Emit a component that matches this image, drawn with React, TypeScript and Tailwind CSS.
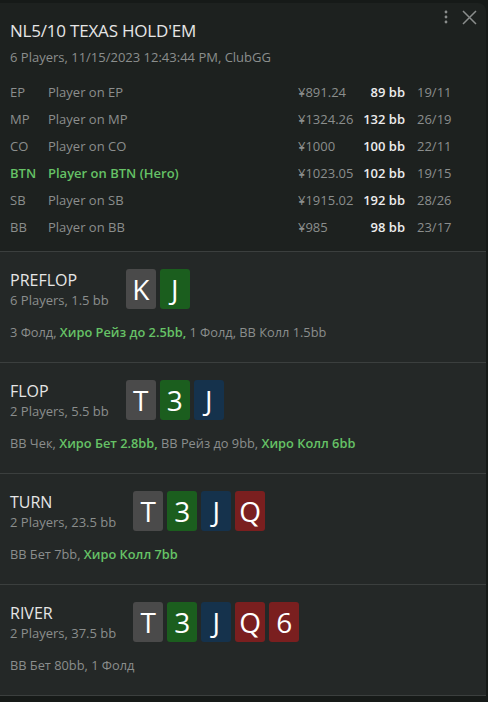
import React from 'react';

type Card = { r: string; c: 'gray' | 'green' | 'blue' | 'red' };

const cardColors: Record<Card['c'], string> = {
  gray: 'bg-[#4a4a4a]',
  green: 'bg-[#1b5e1e]',
  blue: 'bg-[#15324c]',
  red: 'bg-[#7a1f1f]',
};

const players = [
  { pos: 'EP', name: 'Player on EP', stack: '¥891.24', bb: '89 bb', stat: '19/11' },
  { pos: 'MP', name: 'Player on MP', stack: '¥1324.26', bb: '132 bb', stat: '26/19' },
  { pos: 'CO', name: 'Player on CO', stack: '¥1000', bb: '100 bb', stat: '22/11' },
  { pos: 'BTN', name: 'Player on BTN (Hero)', stack: '¥1023.05', bb: '102 bb', stat: '19/15', hero: true },
  { pos: 'SB', name: 'Player on SB', stack: '¥1915.02', bb: '192 bb', stat: '28/26' },
  { pos: 'BB', name: 'Player on BB', stack: '¥985', bb: '98 bb', stat: '23/17' },
];

type Act = { t: string; hero?: boolean };

const streets: { name: string; info: string; cards: Card[]; acts: Act[] }[] = [
  {
    name: 'PREFLOP',
    info: '6 Players, 1.5 bb',
    cards: [{ r: 'K', c: 'gray' }, { r: 'J', c: 'green' }],
    acts: [{ t: '3 Фолд, ' }, { t: 'Хиро Рейз до 2.5bb,', hero: true }, { t: ' 1 Фолд, BB Колл 1.5bb' }],
  },
  {
    name: 'FLOP',
    info: '2 Players, 5.5 bb',
    cards: [{ r: 'T', c: 'gray' }, { r: '3', c: 'green' }, { r: 'J', c: 'blue' }],
    acts: [{ t: 'BB Чек, ' }, { t: 'Хиро Бет 2.8bb,', hero: true }, { t: ' BB Рейз до 9bb, ' }, { t: 'Хиро Колл 6bb', hero: true }],
  },
  {
    name: 'TURN',
    info: '2 Players, 23.5 bb',
    cards: [{ r: 'T', c: 'gray' }, { r: '3', c: 'green' }, { r: 'J', c: 'blue' }, { r: 'Q', c: 'red' }],
    acts: [{ t: 'BB Бет 7bb, ' }, { t: 'Хиро Колл 7bb', hero: true }],
  },
  {
    name: 'RIVER',
    info: '2 Players, 37.5 bb',
    cards: [{ r: 'T', c: 'gray' }, { r: '3', c: 'green' }, { r: 'J', c: 'blue' }, { r: 'Q', c: 'red' }, { r: '6', c: 'red' }],
    acts: [{ t: 'BB Бет 80bb, 1 Фолд' }],
  },
];

export default function App() {
  return (
    <div className="w-[488px] h-[702px] bg-[#161a18] flex flex-col overflow-hidden" style={{ fontFamily: '"Open Sans", "Noto Sans", sans-serif' }}>
      <div className="h-[3px] shrink-0" />
      <div className="w-[486px] flex flex-col rounded-tr-lg overflow-hidden">
        {/* header */}
        <div className="bg-[#1d211f] px-[10px] pt-[16px] h-[249px] relative border-b border-[#3b3f3e]">
          <div className="absolute right-[9px] top-[6px] flex items-center gap-[14px] text-[#8a8d8c]">
            <svg width="4" height="16" viewBox="0 0 4 16" fill="currentColor">
              <circle cx="2" cy="3" r="1.4" />
              <circle cx="2" cy="8" r="1.4" />
              <circle cx="2" cy="13" r="1.4" />
            </svg>
            <svg width="15" height="15" viewBox="0 0 15 15" stroke="currentColor" strokeWidth="1.5" fill="none">
              <path d="M1 1 L14 14 M14 1 L1 14" />
            </svg>
          </div>
          <div className="text-[17px] leading-[24px] tracking-[-0.2px] text-[#e6e6e6]">NL5/10 TEXAS HOLD'EM</div>
          <div className="text-[13px] leading-[18px] text-[#8b8e8d] mt-[5px]">6 Players, 11/15/2023 12:43:44 PM, ClubGG</div>
          <div className="mt-[13px] flex flex-col">
            {players.map((p) => (
              <div key={p.pos} className="flex items-center h-[27px] text-[13px]">
                <div className={`w-[38px] ${p.hero ? 'text-[#66c266] font-semibold' : 'text-[#8b8e8d]'}`}>{p.pos}</div>
                <div className={`w-[250px] ${p.hero ? 'text-[#66c266] font-semibold' : 'text-[#8b8e8d]'}`}>{p.name}</div>
                <div className="w-[60px] text-[#8b8e8d]">{p.stack}</div>
                <div className="w-[47px] text-right text-[#ececec] font-semibold">{p.bb}</div>
                <div className="ml-[12px] text-[#8b8e8d]">{p.stat}</div>
              </div>
            ))}
          </div>
        </div>
        {/* streets */}
        {streets.map((s) => (
          <div key={s.name} className="bg-[#242827] h-[111px] px-[10px] pt-[17px] border-b border-[#3b3f3e]">
            <div className="flex items-start gap-[17px]">
              <div className="flex flex-col">
                <div className="text-[16px] leading-[22px] text-[#e6e6e6]">{s.name}</div>
                <div className="text-[13px] leading-[18px] text-[#8b8e8d]">{s.info}</div>
              </div>
              <div className="flex gap-[4px]">
                {s.cards.map((c, i) => (
                  <div
                    key={i}
                    className={`w-[30px] h-[40px] rounded-[3px] ${cardColors[c.c]} flex items-center justify-center text-[28px] leading-none text-white`}
                  >
                    {c.r}
                  </div>
                ))}
              </div>
            </div>
            <div className="mt-[14px] text-[12.8px] text-[#8b8e8d]">
              {s.acts.map((a, i) => (
                <span key={i} className={a.hero ? 'text-[#66c266] font-semibold' : ''}>
                  {a.t}
                </span>
              ))}
            </div>
          </div>
        ))}
      </div>
    </div>
  );
}
